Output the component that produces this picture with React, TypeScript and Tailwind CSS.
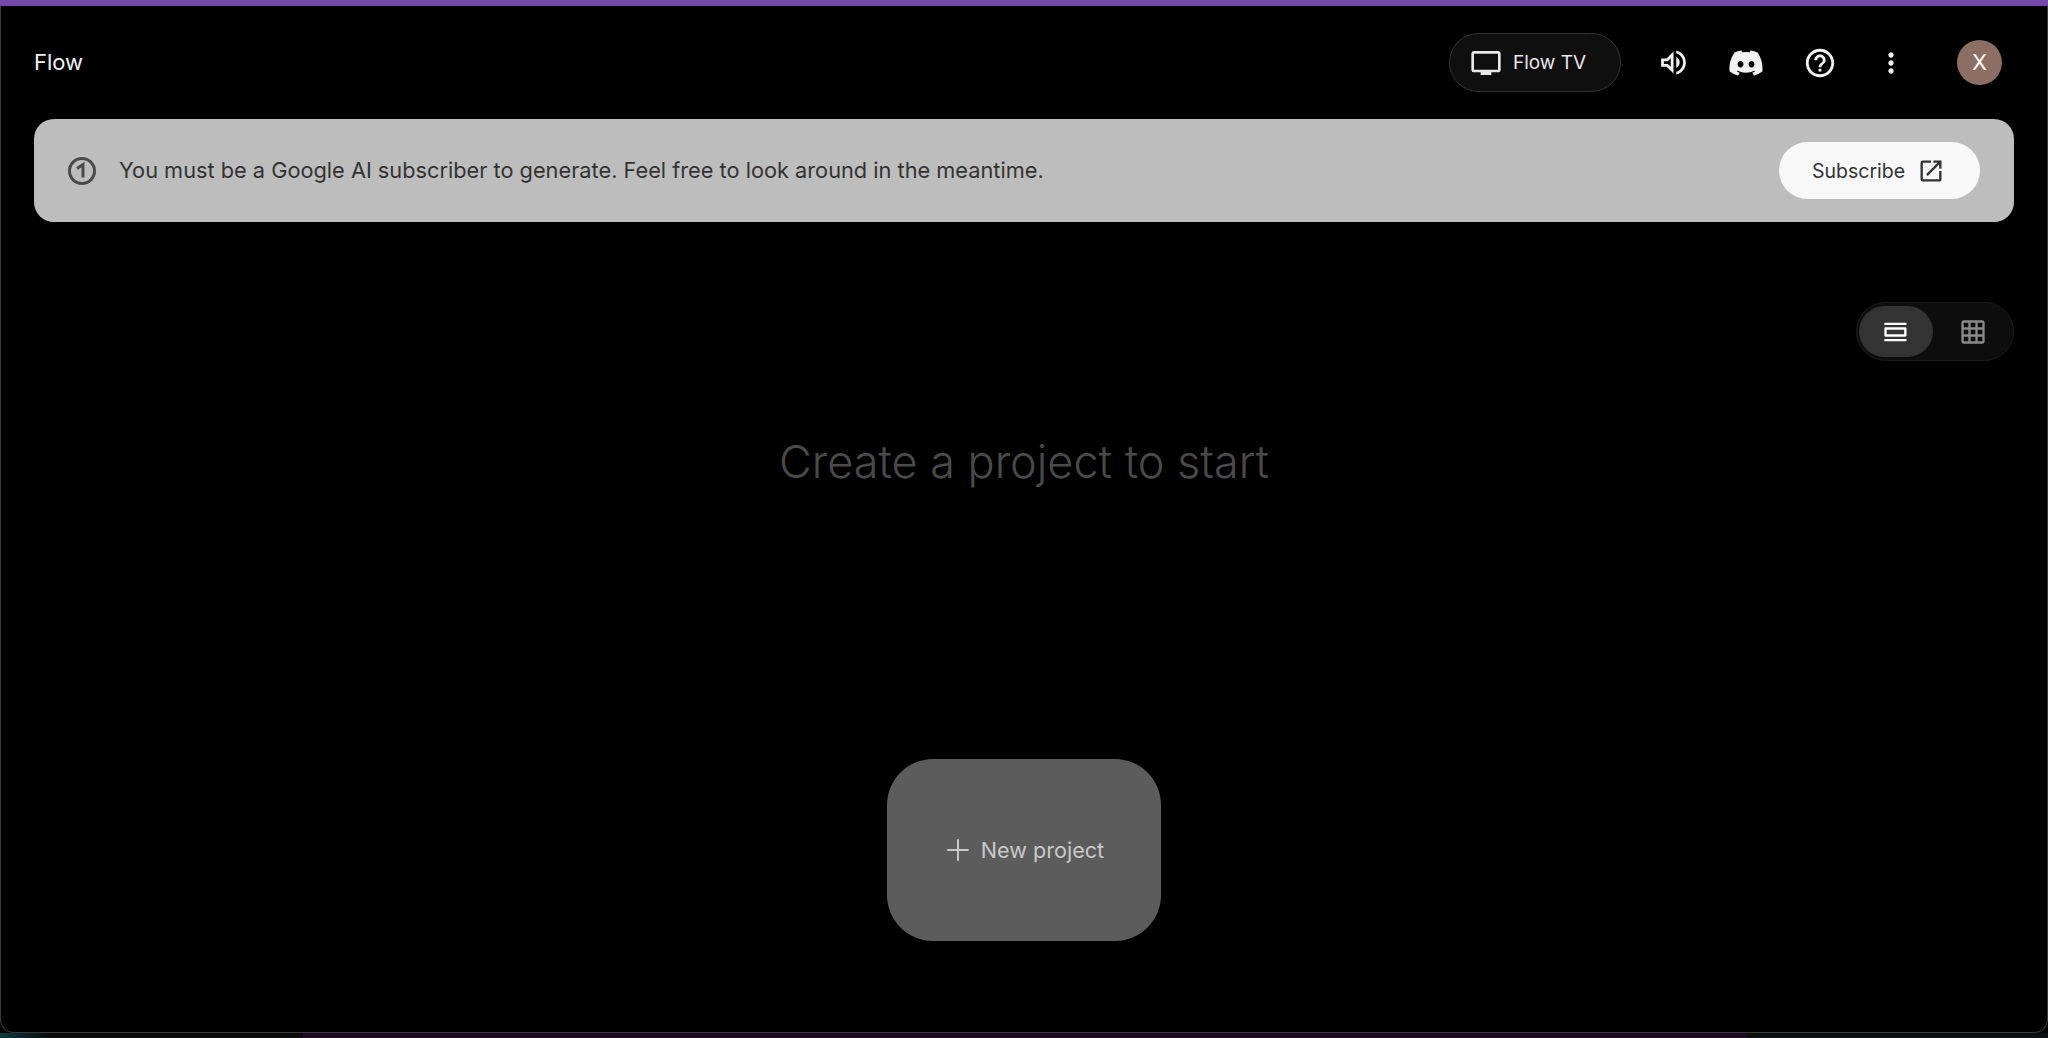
import React from 'react';
import { FaDiscord } from 'react-icons/fa';
import {
    MdHelpOutline,
    MdMoreVert,
    MdOpenInNew,
    MdOutlineGridOn,
    MdOutlineTv,
    MdOutlineViewDay,
    MdOutlineVolumeUp,
} from 'react-icons/md';
import { Plus } from 'lucide-react';

const IconButton: React.FC<{ className: string; children: React.ReactNode }> = ({ className, children }) => (
    <button className={`flex h-12 w-12 items-center justify-center text-[#f2f2f2] ${className}`}>{children}</button>
);

const App: React.FC = () => {
    return (
        <div className="flex h-screen w-full flex-col overflow-hidden bg-black font-['Inter',sans-serif]">
            {/* window accent */}
            <div className="h-[6px] shrink-0 bg-[#7549a8]" />

            <main className="flex min-h-0 flex-1 flex-col rounded-b-[14px] border-x border-b border-[#3a3a3a] bg-black">
                <header className="flex h-[113px] shrink-0 items-center pl-[33px] pr-[45px]">
                    <span className="text-[22px] text-[#f5f5f5]">Flow</span>
                    <div className="ml-auto flex items-center">
                        <button className="flex h-[59px] w-[172px] items-center gap-[11px] rounded-full border border-[#333333] bg-[#0f0f0f] pl-[20px] text-[19px] text-[#e8e8e8]">
                            <MdOutlineTv size={32} />
                            <span className="mt-[2px]">Flow TV</span>
                        </button>
                        <IconButton className="ml-[28px]"><MdOutlineVolumeUp size={33} /></IconButton>
                        <IconButton className="ml-[25px]"><FaDiscord size={36} /></IconButton>
                        <IconButton className="ml-[26px]"><MdHelpOutline size={34} /></IconButton>
                        <IconButton className="ml-[23px]"><MdMoreVert size={32} /></IconButton>
                        <div className="ml-[42px] flex h-[45px] w-[45px] items-center justify-center rounded-full bg-[#8d6e63] text-[22px] text-white">X</div>
                    </div>
                </header>

                <div className="mx-[33px] flex h-[103px] shrink-0 items-center rounded-[20px] bg-[#bdbdbd] pl-[32px] pr-[34px]">
                    <svg width="32" height="32" viewBox="0 0 32 32" fill="none" className="shrink-0">
                        <circle cx="16" cy="16" r="12.5" stroke="#4a4a4a" strokeWidth="3" />
                        <path d="M11 13.5 L17 9.5 V22.5" stroke="#4a4a4a" strokeWidth="3" />
                    </svg>
                    <span className="ml-[21px] text-[21.75px] text-[#333333]">You must be a Google AI subscriber to generate. Feel free to look around in the meantime.</span>
                    <button className="ml-auto flex h-[57px] w-[201px] items-center gap-[12px] rounded-full bg-[#f8f8f8] pl-[33px] text-[19.5px] text-[#333333]">
                        <span className="mt-[2px]">Subscribe</span>
                        <MdOpenInNew size={28} />
                    </button>
                </div>

                <div className="mt-[80px] flex shrink-0 justify-end pr-[33px]">
                    <div className="flex h-[59px] w-[158px] items-center rounded-full border border-[#1c1c1c] bg-[#0d0d0d] pl-[2px]">
                        <div className="flex h-[51px] w-[74px] items-center justify-center rounded-full bg-[#333333] text-white">
                            <MdOutlineViewDay size={28} />
                        </div>
                        <div className="flex w-[81px] items-center justify-center text-[#8a8a8a]">
                            <MdOutlineGridOn size={28} />
                        </div>
                    </div>
                </div>

                <h1 className="mt-[71px] text-center text-[45px] font-light leading-[60px] text-[#4a4a4a]">Create a project to start</h1>

                <button className="mx-auto mt-[267px] flex h-[182px] w-[274px] shrink-0 items-center justify-center gap-[6px] rounded-[46px] bg-[#5c5c5c] pr-[3px] text-[21.6px] text-[#c9c9c9]">
                    <Plus size={34} strokeWidth={1.4} />
                    New project
                </button>
            </main>

            {/* desktop showing through below the window */}
            <div className="h-[5px] shrink-0 bg-[linear-gradient(90deg,#0c3a44_0,#0a0a0a_50px,#0a0a0a_303px,#1d0a24_303px,#1d0a24_1747px,#0c0f10_1747px)]" />
        </div>
    );
};

export default App;
